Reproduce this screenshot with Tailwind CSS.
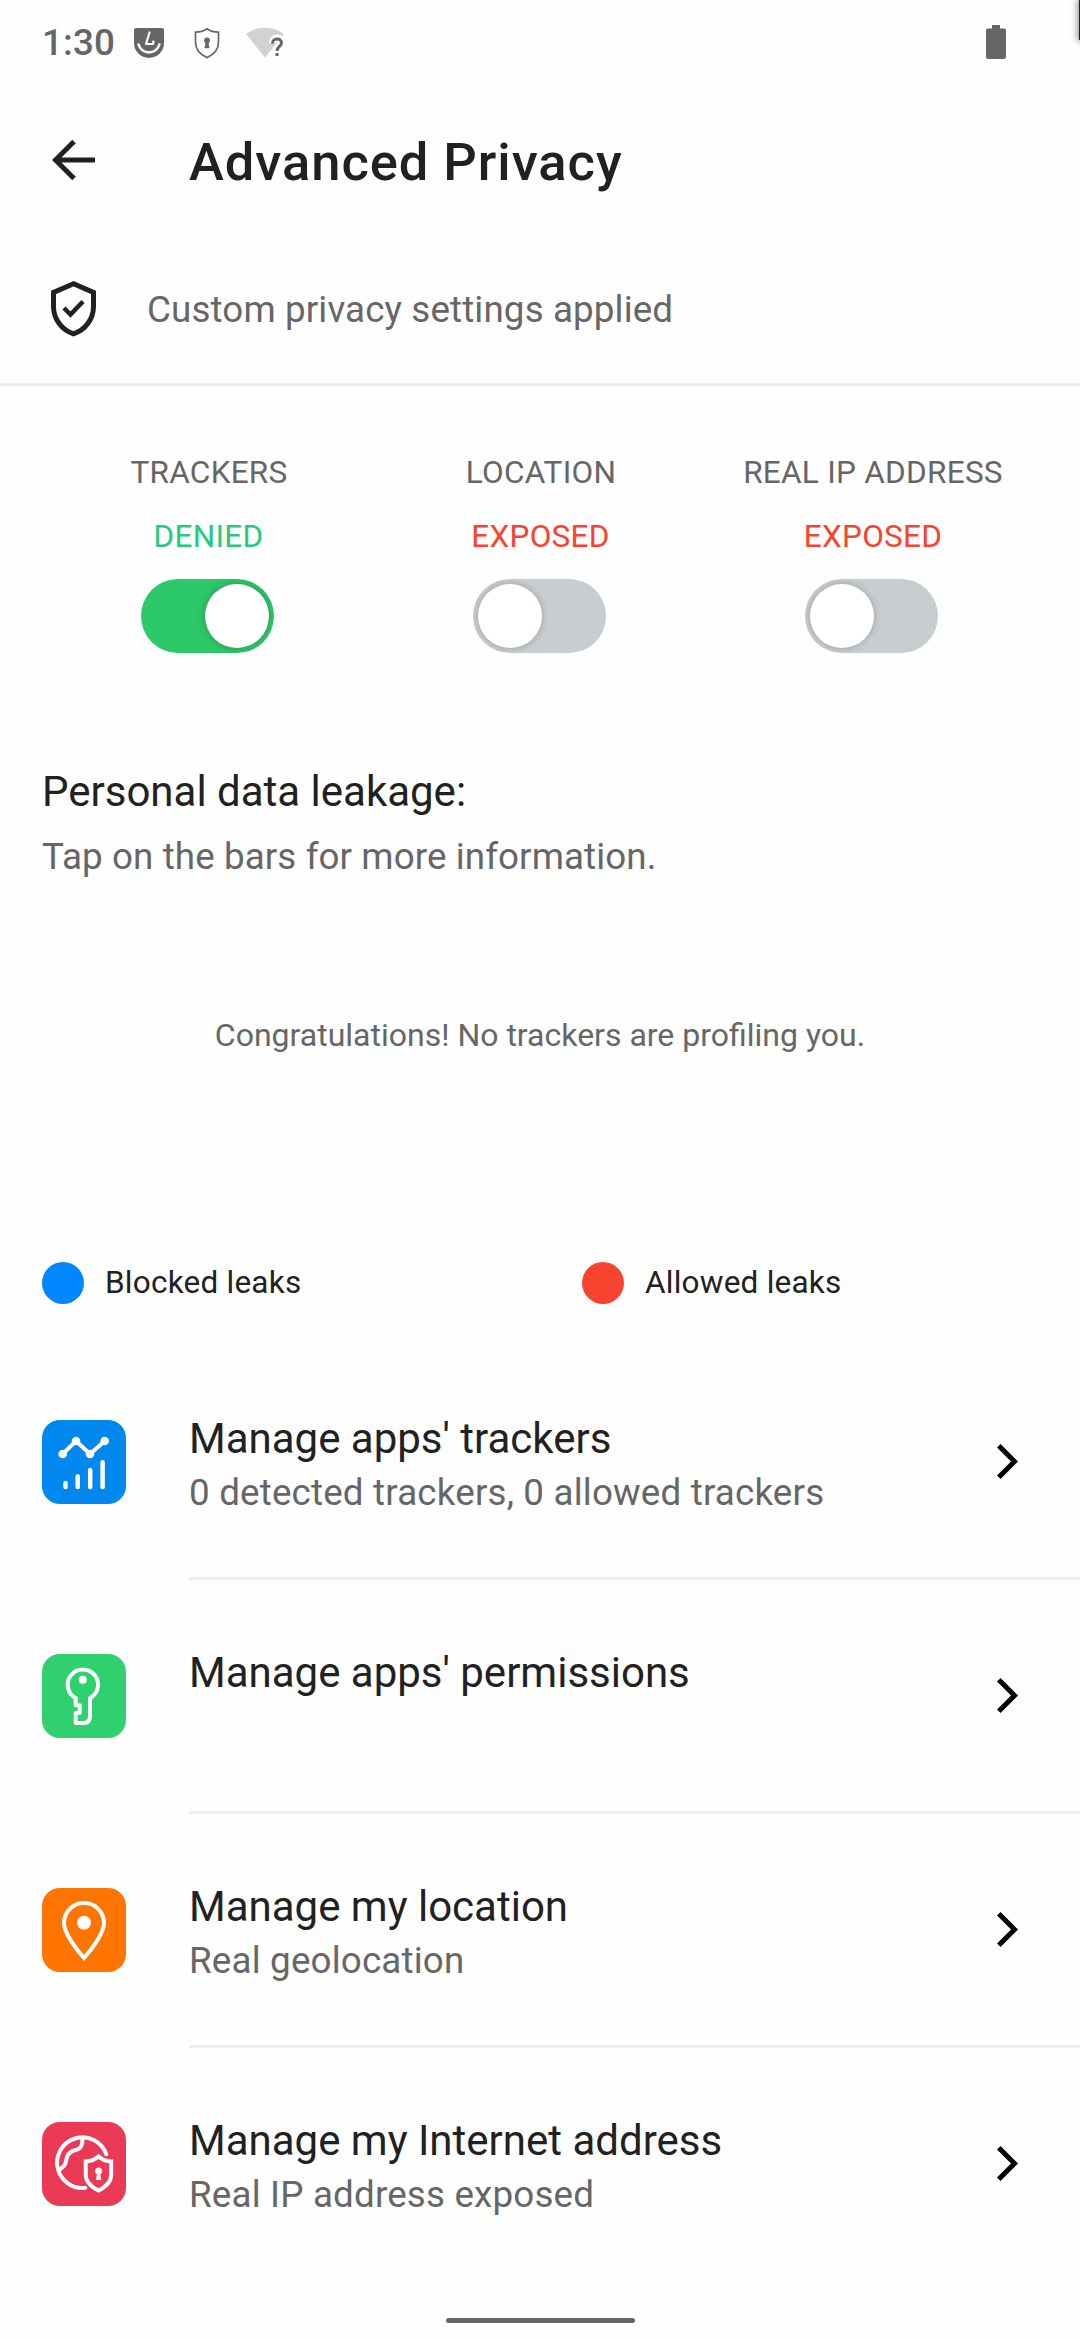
<!DOCTYPE html>
<html lang="en">
<head>
<meta charset="utf-8">
<title>Advanced Privacy</title>
<script src="https://cdn.jsdelivr.net/npm/@tailwindcss/browser@4"></script>
</head>
<body class="bg-[#fefefe]">
<div class="relative flex h-[2340px] w-[1080px] flex-col overflow-hidden bg-[#fefefe] font-['Roboto',sans-serif] text-[#212121]">

  <!-- Status bar -->
  <header class="flex h-[86px] shrink-0 items-center pl-[42px] text-[#666]">
    <span class="w-[92px] text-[36.75px] leading-[48px] font-medium tracking-[0.2px]">1:30</span>
    <svg class="h-[30px] w-[30px]" viewBox="0 0 30 30">
      <path d="M2 0H28Q30 0 30 2V15A15 15 0 0 1 0 15V2Q0 0 2 0Z" fill="#666"/>
      <path d="M4.600 16.500A10.800 10.800 0 0 0 25.400 16.500" fill="none" stroke="#fefefe" stroke-width="2.600" stroke-linecap="round"/>
      <path d="M15.500 4.500 12 16H18.500Q20 15.500 19.300 13.500" fill="none" stroke="#fefefe" stroke-width="2.200" stroke-linecap="round" stroke-linejoin="round"/>
    </svg>
    <svg class="ml-[30px] h-[32px] w-[26px]" viewBox="0 0 26 32">
      <path d="M13 1.800C9.500 4.300 5.500 5.200 1.500 5.200V15C1.500 22.500 6 27.500 13 30.600C20 27.500 24.500 22.500 24.500 15V5.200C20.500 5.200 16.500 4.300 13 1.800Z" fill="none" stroke="#666" stroke-width="1.700"/>
      <circle cx="13" cy="13.500" r="2.900" fill="#666"/>
      <path d="M12 14H14L15.600 21.300H10.400Z" fill="#666"/>
    </svg>
    <svg class="ml-[26px] h-[32px] w-[40px]" viewBox="0 0 40 32">
      <path d="M0 7C11-1.500 27-1.500 38 7L19 30.500Z" fill="#d2d2d2"/>
      <path d="M26.500 16C26.500 9.500 35.500 9.500 35.500 15C35.500 18.500 31 19 31 23.500V28.500" fill="none" stroke="#fefefe" stroke-width="7"/>
      <path d="M26.500 16.500C26.500 10.500 35.500 10.500 35.500 16C35.500 19.500 31 19.500 31 24" fill="none" stroke="#666" stroke-width="3"/>
      <rect x="29.500" y="26" width="3" height="3" fill="#666"/>
    </svg>
    <svg class="mr-[74px] mb-[2px] ml-auto h-[34px] w-5" viewBox="0 0 20 34">
      <path d="M6 0H14V3.500H18Q20 3.500 20 5.500V32Q20 34 18 34H2Q0 34 0 32V5.500Q0 3.500 2 3.500H6Z" fill="#666"/>
    </svg>
  </header>
  <div class="absolute top-0 left-[1079px] h-10 w-4 bg-[#222] shadow-[0_0_7px_1px_rgba(0,0,0,0.5)]"></div>

  <!-- App bar -->
  <div class="flex h-[148px] shrink-0 items-center pl-[52px]">
    <svg class="h-[42px] w-[43px]" viewBox="0 0 43 42">
      <path d="M22 2.500 3.500 21 22 39.500M3.500 21H43" fill="none" stroke="#212121" stroke-width="5"/>
    </svg>
    <h1 class="mt-[3px] ml-[94px] text-[52.5px] leading-[64px] font-medium tracking-[0.96px]">Advanced Privacy</h1>
  </div>

  <!-- Privacy state -->
  <div class="flex h-[152px] shrink-0 items-center border-b-[3px] border-[#eee] pl-[51px]">
    <svg class="h-[56px] w-[45px]" viewBox="0 0 45 56">
      <path d="M22.500 2.800 2.500 11.500V25.500C2.500 38 11 49.500 22.500 52.800C34 49.500 42.500 38 42.500 25.500V11.500Z" fill="none" stroke="#212121" stroke-width="5"/>
      <path d="M13 27 19.500 33.500 32 20.500" fill="none" stroke="#212121" stroke-width="4.500"/>
    </svg>
    <p class="mt-[2px] ml-[51px] text-[36.75px] leading-[48px] tracking-[0.13px] text-[#666]">Custom privacy settings applied</p>
  </div>

  <!-- Toggles -->
  <section class="grid shrink-0 grid-cols-3 px-[42px] pt-[63px] text-[31.5px] leading-[48px] tracking-[0.28px]">
    <div class="flex flex-col items-center">
      <span class="ml-[2px] text-[#666]">TRACKERS</span>
      <span class="mt-4 ml-px text-[#28c97e]">DENIED</span>
      <div class="mt-[18px] mr-px flex h-[74px] w-[133px] items-center justify-end overflow-hidden rounded-full bg-[#2dc868] p-[5px]">
        <div class="size-16 rounded-full bg-white shadow-[0_0_6px_1px_rgba(60,60,60,0.35)]"></div>
      </div>
    </div>
    <div class="flex flex-col items-center">
      <span class="ml-[2px] text-[#666]">LOCATION</span>
      <span class="mt-4 ml-px text-[#f8432e]">EXPOSED</span>
      <div class="mt-[18px] mr-px flex h-[74px] w-[133px] items-center overflow-hidden rounded-full bg-[#c8cdd0] p-[5px]">
        <div class="size-16 rounded-full bg-white shadow-[0_0_6px_1px_rgba(60,60,60,0.25)]"></div>
      </div>
    </div>
    <div class="flex flex-col items-center">
      <span class="ml-[2px] whitespace-nowrap text-[#666]">REAL IP ADDRESS</span>
      <span class="mt-4 ml-[2px] text-[#f8432e]">EXPOSED</span>
      <div class="mt-[18px] mr-px flex h-[74px] w-[133px] items-center overflow-hidden rounded-full bg-[#c8cdd0] p-[5px]">
        <div class="size-16 rounded-full bg-white shadow-[0_0_6px_1px_rgba(60,60,60,0.25)]"></div>
      </div>
    </div>
  </section>

  <!-- Leakage summary -->
  <section class="mt-[111px] shrink-0 px-[42px]">
    <h2 class="text-[42px] leading-[56px]">Personal data leakage:</h2>
    <p class="mt-[13px] text-[36.75px] leading-[48px] tracking-[0.1px] text-[#666]">Tap on the bars for more information.</p>
    <p class="mt-[132px] text-center text-[32px] leading-[44px] text-[#666]">Congratulations! No trackers are profiling you.</p>
    <div class="mt-[205px] grid grid-cols-[540px_1fr] text-[31.5px] leading-[42px] tracking-[0.23px]">
      <div class="flex items-center gap-[21px]"><span class="size-[42px] rounded-full bg-[#0086ff]"></span>Blocked leaks</div>
      <div class="flex items-center gap-[21px]"><span class="size-[42px] rounded-full bg-[#f8432e]"></span>Allowed leaks</div>
    </div>
  </section>

  <!-- Management list -->
  <ul class="mt-[42px] shrink-0">
    <li class="flex h-[234px] pl-[42px]">
      <svg class="mt-[74px] size-[84px] rounded-[18px] bg-[#0088ee]" viewBox="0 0 84 84" fill="none" stroke="#fff" stroke-linecap="round">
        <path d="M20.700 34 34 21 48 34 62.700 21" stroke-width="4"/>
        <g fill="#fff" stroke="none"><circle cx="20.700" cy="34" r="4.300"/><circle cx="34" cy="21" r="4.300"/><circle cx="48" cy="34" r="4.300"/><circle cx="62.700" cy="21" r="4.300"/></g>
        <path d="M23.500 63V67M35.700 56.200V67M48.200 50V67M60.600 42.200V67" stroke-width="4.500"/>
      </svg>
      <div class="ml-[63px] flex flex-1 border-b-[3px] border-[#eee]">
        <div class="flex-1 pt-[67px]">
          <h3 class="text-[42px] leading-[52px]">Manage apps' trackers</h3>
          <p class="mt-[5px] text-[36.75px] leading-[46px] tracking-[0.18px] text-[#666]">0 detected trackers, 0 allowed trackers</p>
        </div>
        <svg class="mt-[98px] mr-[61px] h-[35px] w-[22px]" viewBox="0 0 22 35" fill="none" stroke="#000" stroke-width="5"><path d="M1.800 1.800 17.500 17.500 1.800 33.200"/></svg>
      </div>
    </li>
    <li class="flex h-[234px] pl-[42px]">
      <svg class="mt-[74px] size-[84px] rounded-[18px] bg-[#2fd06d]" viewBox="0 0 84 84" fill="none" stroke="#fff" stroke-width="4" stroke-linejoin="round">
        <path d="M33.700 44A15.200 15.200 0 1 1 48 44V62Q48 69 41.500 69H33.700V59H37.700V51.300H33.700Z"/>
        <circle cx="40.800" cy="25.700" r="4" fill="#fff" stroke="none"/>
      </svg>
      <div class="ml-[63px] flex flex-1 border-b-[3px] border-[#eee]">
        <div class="flex-1 pt-[67px]">
          <h3 class="text-[42px] leading-[52px]">Manage apps' permissions</h3>
        </div>
        <svg class="mt-[98px] mr-[61px] h-[35px] w-[22px]" viewBox="0 0 22 35" fill="none" stroke="#000" stroke-width="5"><path d="M1.800 1.800 17.500 17.500 1.800 33.200"/></svg>
      </div>
    </li>
    <li class="flex h-[234px] pl-[42px]">
      <svg class="mt-[74px] size-[84px] rounded-[18px] bg-[#ff7500]" viewBox="0 0 84 84" fill="none" stroke="#fff" stroke-width="4">
        <path d="M42 70C34 61 22 45 22 35A20 20 0 0 1 62 35C62 45 50 61 42 70Z"/>
        <circle cx="42" cy="34.700" r="7" fill="#fff" stroke="none"/>
      </svg>
      <div class="ml-[63px] flex flex-1 border-b-[3px] border-[#eee]">
        <div class="flex-1 pt-[67px]">
          <h3 class="text-[42px] leading-[52px]">Manage my location</h3>
          <p class="mt-[5px] text-[36.75px] leading-[46px] tracking-[0.18px] text-[#666]">Real geolocation</p>
        </div>
        <svg class="mt-[98px] mr-[61px] h-[35px] w-[22px]" viewBox="0 0 22 35" fill="none" stroke="#000" stroke-width="5"><path d="M1.800 1.800 17.500 17.500 1.800 33.200"/></svg>
      </div>
    </li>
    <li class="flex h-[231px] pl-[42px]">
      <svg class="mt-[74px] size-[84px] rounded-[18px] bg-[#ea3a55]" viewBox="0 0 84 84" fill="none" stroke="#fff" stroke-width="4" stroke-linecap="round">
        <path d="M64.300 32.300A25.300 25.300 0 1 0 43.300 65.800"/>
        <path d="M40.300 16C41 23 39 26.500 34.500 27.800C29 29 25.500 31 24.500 37C23.800 43 21.500 45 17 48"/>
        <path d="M56.500 34.500C52.500 38 48 39.300 43.700 39.500V52.500C43.700 60 48.500 64.500 56.500 68.500C64.500 64.500 69.200 60 69.200 52.500V39.500C65 39.300 60.500 38 56.500 34.500Z" stroke-linecap="butt"/>
        <g fill="#fff" stroke="none"><circle cx="56.600" cy="48.900" r="3.500"/><path d="M55.400 50H57.900L59.400 58H53.900Z"/></g>
      </svg>
      <div class="ml-[63px] flex flex-1">
        <div class="flex-1 pt-[67px]">
          <h3 class="text-[42px] leading-[52px]">Manage my Internet address</h3>
          <p class="mt-[5px] text-[36.75px] leading-[46px] tracking-[0.18px] text-[#666]">Real IP address exposed</p>
        </div>
        <svg class="mt-[98px] mr-[61px] h-[35px] w-[22px]" viewBox="0 0 22 35" fill="none" stroke="#000" stroke-width="5"><path d="M1.800 1.800 17.500 17.500 1.800 33.200"/></svg>
      </div>
    </li>
  </ul>

  <!-- Gesture bar -->
  <div class="mt-auto mb-[17px] h-[5px] w-[189px] shrink-0 self-center rounded-full bg-[#666]"></div>
</div>
</body>
</html>
